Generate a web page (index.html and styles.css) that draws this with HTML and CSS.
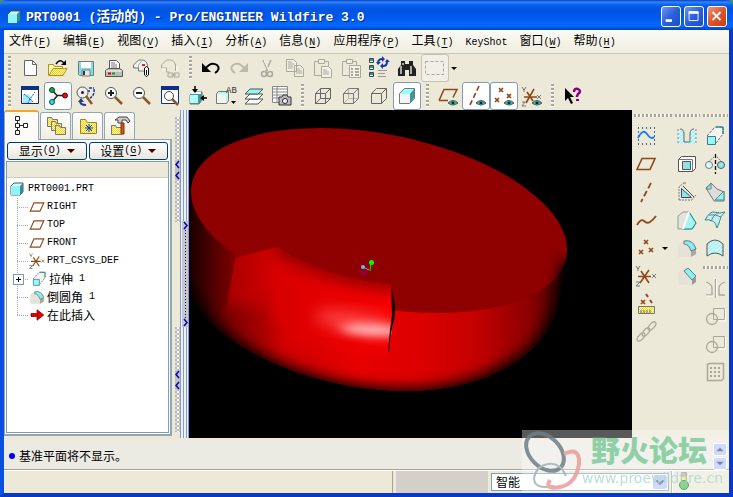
FILE: index.html
```html
<!DOCTYPE html>
<html lang="zh-CN">
<head>
<meta charset="utf-8">
<title>PRT0001 (活动的) - Pro/ENGINEER Wildfire 3.0</title>
<link rel="stylesheet" href="styles.css">
</head>
<body>
<svg class="defs" aria-hidden="true">
  <defs>
    <pattern id="hatch" width="4" height="4" patternUnits="userSpaceOnUse"><rect width="4" height="4" fill="#a8f4f8"/><path d="M0 4L4 0" stroke="#fff"/></pattern>
    <pattern id="check" width="2" height="2" patternUnits="userSpaceOnUse"><rect width="2" height="2" fill="#ffff90"/><path d="M0 0h1v1H0zM1 1h1v1H1z" fill="#f0d040"/></pattern>
    <g id="eye"><path d="M12 19q5-5 10 0q-5 4-10 0z" fill="#888" stroke="#555"/><circle cx="17" cy="19" r="2.2" fill="#00a0a0"/><circle cx="17" cy="19" r="1" fill="#000"/></g>
    <g id="x"><path d="M-2-2L2 2M2-2L-2 2" stroke-width="1.6" fill="none"/></g>
  </defs>
  <symbol id="part" viewBox="0 0 14 14"><path d="M1 4l3-3h9v9l-3 3H1z" fill="#c8ffff" stroke="#555"/><path d="M10 4l3-3v9l-3 3z" fill="#358e94"/><path d="M1 4h9v9H1z" fill="#8ff4f8"/></symbol>
  <symbol id="new" viewBox="0 0 24 24"><path d="M6.500 4.500h8l4 4v11h-12z" fill="#fff" stroke="#666"/><path d="M14.500 4.500v4h4" fill="none" stroke="#666"/></symbol>
  <symbol id="open" viewBox="0 0 24 24"><path d="M2.500 19.500v-11h5l1 2h8v3" fill="#ffffb0" stroke="#b89018"/><path d="M3 19.500l4-7h14l-4 7z" fill="url(#check)" stroke="#b89018"/><path d="M10 8q4-6 8-1" fill="none" stroke="#000" stroke-width="1.500"/><path d="M20 4v5h-5z"/></symbol>
  <symbol id="save" viewBox="0 0 24 24"><path d="M4.500 5.500h15v14h-14l-1-1z" fill="#78e4e8" stroke="#777"/><path d="M7 6h10v6H7z" fill="#fff"/><path d="M8 14h8v6H8z" fill="#e8e8e8" stroke="#777"/><path d="M10 15v4" stroke="#333" stroke-width="2"/></symbol>
  <symbol id="print" viewBox="0 0 24 24"><path d="M7.500 13.500v-9h7l3 3v6" fill="#fff" stroke="#555"/><path d="M9 7h4M9 9h6M9 11h6" stroke="#777"/><path d="M3.500 14.500l3-2h11l3 2v6h-17z" fill="#bbb" stroke="#555"/><path d="M4 15h16" stroke="#fff"/><path d="M6 17.500h3" stroke="#d00" stroke-width="2"/><path d="M10 17.500h3" stroke="#0a0" stroke-width="2"/></symbol>
  <symbol id="mail" viewBox="0 0 24 24"><path d="M3.500 12V9l5-5h3q5 0 6 5v6h-9v-3z" fill="#f0f0f0" stroke="#777"/><path d="M8.500 12V9l3-4" fill="none" stroke="#aaa"/><path d="M12 8h3v2h-3z" fill="#e02020"/><path d="M14.500 19v-7q2-3 4 0v7q-2 3-4 0zM16.500 14v5" fill="#fff" stroke="#111"/></symbol>
  <symbol id="maillink" viewBox="0 0 24 24"><path d="M3.500 12V9l5-5h3q5 0 6 5v6M3.500 12h5v4h3M10 17h5v4h-5zM16 17h5v4h-5zM13 19h5" fill="none" stroke="#aaa899"/><path d="M19 10v5M4 13h4" stroke="#fff"/></symbol>
  <symbol id="undo" viewBox="0 0 24 24"><path d="M6 13q6-8 12-4q4 4-2 8" fill="none" stroke="currentColor" stroke-width="2"/><path d="M3 7v9h9z" fill="currentColor"/></symbol>
  <symbol id="cut" viewBox="0 0 24 24"><path d="M8 4l5 11M16 4l-5 11" stroke="#aaa899" stroke-width="1.500"/><path d="M9 4l5 11" stroke="#fff"/><circle cx="9" cy="18" r="2.500" fill="none" stroke="#aaa899" stroke-width="1.500"/><circle cx="15" cy="18" r="2.500" fill="none" stroke="#aaa899" stroke-width="1.500"/></symbol>
  <symbol id="copy" viewBox="0 0 24 24"><path d="M3.500 3.500h7l3 3v9h-10zM11.500 9.500h6l3 3v8h-9z" fill="#f0eee2" stroke="#aaa899"/><path d="M5 6h4M5 8h6M5 10h5M5 12h5M13 13h4M13 15h6M13 17h6" stroke="#aaa899"/></symbol>
  <symbol id="paste" viewBox="0 0 24 24"><path d="M3.500 5.500h14v14h-14z" fill="none" stroke="#aaa899"/><path d="M7.500 3.500h6v4h-6z" fill="#f0eee2" stroke="#aaa899"/><path d="M10.500 10.500h7l3 3v8h-10z" fill="#f4f2e8" stroke="#aaa899"/><path d="M12 14h4M12 16h6M12 18h6" stroke="#aaa899"/></symbol>
  <symbol id="pastesp" viewBox="0 0 24 24"><path d="M3.500 5.500h14v14h-14z" fill="none" stroke="#aaa899"/><path d="M7.500 3.500h6v4h-6z" fill="#f0eee2" stroke="#aaa899"/><path d="M10.500 9.500h11v12h-11z" fill="#f4f2e8" stroke="#aaa899"/><path d="M12 13h2M16 13h4M12 16h2M16 16h4M12 19h2M16 19h4" stroke="#aaa899" stroke-width="2"/></symbol>
  <symbol id="regen" viewBox="0 0 24 24"><g fill="#fff" stroke="#444"><path d="M2.500 2.500h4v4h-4zM2.500 9.500h4v4h-4zM2.500 16.500h4v4h-4z"/></g><path d="M3 4h3M3 11h3M3 18h3" stroke="#0aa" stroke-width="2"/><path d="M11 6q1-3 4-3M20 6q0 4-4 4" fill="none" stroke="#1838b0" stroke-width="2"/><path d="M15 0l3 3-3 3zM16 7v6l-3-3zM9 6h5l-3 3zM18 6h5l-3-3z" fill="#1838b0"/><path d="M11 14.500h9M11 17.500h7M11 20.500h8" stroke="#999"/></symbol>
  <symbol id="find" viewBox="0 0 24 24"><path d="M6 5h4v3h4V5h4v4l3 4v7h-7v-6h-4v6H3v-7l3-4z" fill="#222"/><path d="M6 10v8M16 10v8M8 7v2" stroke="#aaa" stroke-width="2"/></symbol>
  <symbol id="box" viewBox="0 0 24 24"><path d="M2.500 5.500h18v13h-18z" fill="none" stroke="#aaa899" stroke-dasharray="3 2"/></symbol>
  <symbol id="repaint" viewBox="0 0 24 24"><path d="M3.500 3.500h17v16h-17z" fill="#fff" stroke="#225"/><path d="M3 2h18v4H3z" fill="#0a328c"/><path d="M5 10q10-1 9 9H5z" fill="#a0e8ff"/><path d="M6 10l6 5 5-7M12 15l-2 4M12 15l3 3" stroke="#2860a0" fill="none" stroke-dasharray="2 1"/></symbol>
  <symbol id="spin" viewBox="0 0 24 24"><path d="M6 6l5 5.500h8M11 12l-5 6" stroke="#222" fill="none" stroke-width="1.500"/><circle cx="6" cy="6" r="2.500" fill="#18a828" stroke="#044"/><circle cx="19" cy="11.500" r="2.500" fill="#e01010" stroke="#500"/><circle cx="6" cy="18" r="2.500" fill="#30d8e8" stroke="#055"/></symbol>
  <symbol id="orient" viewBox="0 0 24 24"><circle cx="8.500" cy="8.500" r="5.500" fill="#eee" stroke="#555"/><circle cx="8.500" cy="8.500" r="1.500" fill="#222"/><path d="M12 12l6 8" stroke="#8d572e" stroke-width="2.500"/><path d="M15 4h5M14 7h2M20 5q1 6-4 9" fill="none" stroke="#203898" stroke-width="1.500" stroke-dasharray="3 1"/><path d="M6 17q0 4 6 4" fill="none" stroke="#203898" stroke-width="2"/><path d="M4 18l3-4 3 4z" fill="#203898"/></symbol>
  <symbol id="zoomin" viewBox="0 0 24 24"><circle cx="9" cy="9" r="5.500" fill="#fff" stroke="#555"/><path d="M6 9h6M9 6v6" stroke="#222" stroke-width="2"/><path d="M13 13l7 7" stroke="#8d572e" stroke-width="2.500"/></symbol>
  <symbol id="zoomout" viewBox="0 0 24 24"><circle cx="9" cy="9" r="5.500" fill="#fff" stroke="#555"/><path d="M6 9h6" stroke="#222" stroke-width="2"/><path d="M13 13l7 7" stroke="#8d572e" stroke-width="2.500"/></symbol>
  <symbol id="refit" viewBox="0 0 24 24"><path d="M3.500 3.500h17v16h-17z" fill="#fff" stroke="#0a328c"/><path d="M3 2h18v4H3z" fill="#0a328c"/><circle cx="11" cy="12" r="4.500" fill="#fff" stroke="#444"/><path d="M14 15l6 6" stroke="#8d572e" stroke-width="2.500"/></symbol>
  <symbol id="angle" viewBox="0 0 24 24"><path d="M4 11l3-3h9v8l-3 4H4z" fill="#389ca0" stroke="#777"/><path d="M4 11h8v8H4z" fill="#b0ffff"/><path d="M5 9h10" stroke="#fff" stroke-width="2"/><path d="M9 2v5M21 14h-5" stroke="#000" stroke-width="1.500"/><path d="M6 5h6l-3 4zM18 11v6l-4-3z"/></symbol>
  <symbol id="layers" viewBox="0 0 24 24"><g stroke="#555"><path d="M3 20l5-5h13l-5 5z" fill="#fff"/><path d="M3 15l5-5h13l-5 5z" fill="#fff"/><path d="M3 10l5-5h13l-5 5z" fill="#98f4f4"/></g></symbol>
  <symbol id="viewmgr" viewBox="0 0 24 24"><path d="M2.500 2.500h15v16h-15z" fill="#fff" stroke="#888"/><path d="M3 5h14M3 8h14M3 11h14M3 14h14M7 3v15" stroke="#888"/><path d="M9 13h3l1-2h4l1 2h3v8H9z" fill="#bbb" stroke="#333"/><circle cx="15" cy="17" r="2.500" fill="#fff" stroke="#222"/></symbol>
  <symbol id="wire" viewBox="0 0 24 24"><path d="M4.500 9.500h10v10h-10zM9.500 4.500h10v10h-10zM4.500 9.500l5-5M14.500 9.500l5-5M4.500 19.500l5-5M14.500 19.500l5-5" fill="none" stroke="#666"/></symbol>
  <symbol id="hidden" viewBox="0 0 24 24"><path d="M9.500 4.500v10h10M4.500 19.500l5-5" fill="none" stroke="#b8b5a5"/><path d="M4.500 9.500h10v10h-10zM4.500 9.500l5-5h10v10l-5 5M14.500 9.500l5-5" fill="none" stroke="#777"/></symbol>
  <symbol id="nohidden" viewBox="0 0 24 24"><path d="M4.500 9.500h10v10h-10zM4.500 9.500l5-5h10v10l-5 5M14.500 9.500l5-5" fill="none" stroke="#666"/></symbol>
  <symbol id="shaded" viewBox="0 0 24 24"><path d="M4.500 9.500l5-5h10v10l-5 5h-10z" fill="#98ffff" stroke="#777"/><path d="M15 10l4-5v9l-4 5z" fill="#3898a0"/><path d="M5 10h10v9H5z" fill="#f4f4f4"/></symbol>
  <symbol id="plane" viewBox="0 0 24 24"><path d="M3 17.500l5-11h13l-5 11z" fill="none" stroke="#8f4818" stroke-width="1.600"/></symbol>
  <symbol id="planeeye" viewBox="0 0 24 24"><path d="M3 16.500l5-11h13l-4 8M3 16.500h9" fill="none" stroke="#8f4818" stroke-width="1.500"/><use href="#eye"/></symbol>
  <symbol id="axiseye" viewBox="0 0 24 24"><path d="M15 2L6 21" stroke="#8f4818" stroke-width="1.700" stroke-dasharray="5 3"/><use href="#eye"/></symbol>
  <symbol id="pointeye" viewBox="0 0 24 24"><g stroke="#8f4818"><use href="#x" x="9" y="6"/><use href="#x" x="5" y="16"/><use href="#x" x="17" y="12"/></g><use href="#eye"/></symbol>
  <symbol id="csyseye" viewBox="0 0 24 24"><path d="M4 13h13M6 19l8-14M7 8l6 9" stroke="#8f4818" stroke-width="1.600"/><path d="M2 3l2 3 2-3M4 5v3M2 18h3l-3 4h4M17 11l4 4M21 11l-4 4" stroke="#777" fill="none"/><use href="#eye"/></symbol>
  <symbol id="help" viewBox="0 0 24 24"><path d="M4 4v13l3-3 3 6 2-1-3-6h4z"/><path d="M13 8q0-4 4-3q4 2 0 5l-1 2v1" fill="none" stroke="#800080" stroke-width="2.500"/><path d="M15 15h3v2h-3z" fill="#800080"/></symbol>
  <symbol id="tree" viewBox="0 0 24 24"><path d="M7.500 5v14M7.500 11.500h8" stroke="#222"/><g fill="#fff" stroke="#222"><path d="M5.500 2.500h4v4h-4zM5.500 9.500h4v4h-4zM5.500 16.500h4v4h-4zM13.500 9.500h4v4h-4z"/></g></symbol>
  <symbol id="folders" viewBox="0 0 24 24"><g fill="url(#check)" stroke="#777"><path d="M3.500 12.500v-9h4l1 2h5v7z"/><path d="M7.500 16.500v-9h4l1 2h5v7z"/><path d="M11.500 20.500v-9h4l1 2h5v7z"/></g></symbol>
  <symbol id="fav" viewBox="0 0 24 24"><path d="M4.500 19.500v-14h5l2 3h9v11z" fill="url(#check)" stroke="#998324"/><path d="M13 10v8M9 14h8M10 11l6 6M16 11l-6 6" stroke="#1038a0"/></symbol>
  <symbol id="tools" viewBox="0 0 24 24"><path d="M3.500 20.500v-9h4l1 2h5v7z" fill="url(#check)" stroke="#777"/><path d="M7 6l4-3h8l3 4-2 2-2-3h-4v3h-4V6z" fill="#ccc" stroke="#444"/><path d="M13 9h3v11h-3z" fill="#d85020" stroke="#803010"/></symbol>
  <symbol id="csys" viewBox="0 0 24 24"><path d="M4 12.500h13M6 19l9-13M7 7l8 12" stroke="#8f4818" stroke-width="1.600"/><path d="M2 2l2 3 2-3M4 4v3M2 18h4l-4 4h4M18 10l4 4M22 10l-4 4" stroke="#777" fill="none"/></symbol>
  <symbol id="extrude" viewBox="0 0 24 24"><path d="M4 12l8-9h8v7l-7 9" fill="#f4f4f0" stroke="#777" stroke-dasharray="3 1"/><path d="M13 3h7v7" fill="none" stroke="#00777c"/><path d="M4.500 12.500h8v8h-8z" fill="#98f8f8" stroke="#388088"/></symbol>
  <symbol id="round" viewBox="0 0 24 24"><path d="M3 9l6-5h5q8 3 8 11v3l-5 3H3z" fill="#e5e3d9"/><path d="M16 14l5-2v6l-5 3z" fill="#aaa9a0"/><path d="M9 5q9-2 12 8l-5 2q-2-7-7-7z" fill="#80f0f4" stroke="#777"/></symbol>
  <symbol id="insert" viewBox="0 0 24 24"><path d="M4 10h8V5l9 7-9 7v-5H4z" fill="#e00000" stroke="#700"/></symbol>
  <symbol id="sketch" viewBox="0 0 24 24"><path d="M4 4h17M4 8h1M20 8h1M4 12h1M20 12h1M4 16h1M20 16h1M4 20h17" stroke="#103890" stroke-width="1.500" stroke-dasharray="1 3"/><path d="M4 14q5-10 9-4t7 3" fill="none" stroke="#1080f0" stroke-width="1.800"/></symbol>
  <symbol id="axis" viewBox="0 0 24 24"><path d="M17 3L7 22" stroke="#8f4818" stroke-width="1.800" stroke-dasharray="6 3"/></symbol>
  <symbol id="curve" viewBox="0 0 24 24"><path d="M3 17q4-7 7-4t6 1t6-6" fill="none" stroke="#8f4818" stroke-width="1.800"/></symbol>
  <symbol id="points" viewBox="0 0 24 24"><g stroke="#8f4818"><use href="#x" x="12" y="6"/><use href="#x" x="7" y="16"/><use href="#x" x="17" y="14"/></g></symbol>
  <symbol id="analysis" viewBox="0 0 24 24"><g stroke="#8f4818"><use href="#x" x="9" y="10"/><path d="M12 2l2 3M16 8l2 3" stroke-width="2"/></g><path d="M4.500 14.500h16v7h-16z" fill="url(#check)" stroke="#777"/><path d="M7 18v3M10 18v3M13 18v3M16 18v3" stroke="#666"/></symbol>
  <symbol id="chain" viewBox="0 0 24 24"><g fill="none" stroke="#aaa899" stroke-width="1.300"><ellipse cx="7" cy="17" rx="5" ry="2.500" transform="rotate(-48 7 17)"/><ellipse cx="12" cy="12" rx="5" ry="2.500" transform="rotate(-48 12 12)"/><ellipse cx="18" cy="6" rx="5" ry="2.500" transform="rotate(-48 18 6)"/></g></symbol>
  <symbol id="hole" viewBox="0 0 24 24"><path d="M3 6h18v14H3z" fill="url(#hatch)"/><path d="M5 5q4 0 4 5v8h6v-8q0-5 4-5" fill="#eae7d7" stroke="#666"/><path d="M3 5v14M21 5v14" stroke="#888" stroke-dasharray="2 2"/></symbol>
  <symbol id="shell" viewBox="0 0 24 24"><path d="M3.500 7.500l3-3h14v12l-3 3h-14z" fill="#fff" stroke="#555"/><path d="M3.500 7.500h14v12" fill="none" stroke="#777"/><path d="M7.500 9.500h8v8h-8z" fill="#80e8ec" stroke="#555"/><path d="M8 10h2v5l-2 2z" fill="#ccc"/></symbol>
  <symbol id="rib" viewBox="0 0 24 24"><path d="M4 20V7l6-5v3M4 20h13l4-5" fill="none" stroke="#777" stroke-dasharray="2 1"/><path d="M6.500 8.500v9h10z" fill="#80ecec" stroke="#446"/><path d="M8 6l11 11" stroke="#444"/></symbol>
  <symbol id="draft" viewBox="0 0 24 24"><path d="M3 8l5-4h6l7 11-3 5-4 1H3z" fill="#e2e4da" stroke="#999"/><path d="M14 4l7 11-4 6H8z" fill="#a8f4f4" stroke="#089"/><path d="M14 4l-6 17" stroke="#fff" stroke-width="2"/></symbol>
  <symbol id="chamfer" viewBox="0 0 24 24"><path d="M3 8l6-4h5l7 8v6l-4 3H3z" fill="#e5e3d9"/><path d="M9 7l4-3 8 8-4 4z" fill="#80f4f8" stroke="#777"/><path d="M17 16l4-3v5l-4 3z" fill="#999"/></symbol>
  <symbol id="revolve" viewBox="0 0 24 24"><path d="M12.500 2v20" stroke="#111" stroke-width="1.300" stroke-dasharray="4 2"/><path d="M5 10l6-5M14 5l5 5" fill="none" stroke="#777" stroke-dasharray="2 1"/><circle cx="6" cy="13" r="3.500" fill="#c8ffff" stroke="#777"/><circle cx="18" cy="13" r="3.500" fill="#90e8ea" stroke="#555"/></symbol>
  <symbol id="sweep" viewBox="0 0 24 24"><path d="M8 3l6 6 7 3v9H11L3 8z" fill="#ddd" stroke="#777"/><path d="M8 3v6H3zM12 20h9v-9z" fill="#90f4f4" stroke="#588"/></symbol>
  <symbol id="blend" viewBox="0 0 24 24"><path d="M2 12q5-9 9-8q6 2 11 0-5 4-6 11l-2 5q-2-7-5-7-4-2-7-1z" fill="url(#hatch)" stroke="#3a8b8f"/><path d="M6 7q7-1 12 2M16 4q-6 3-8 9" fill="none" stroke="#777"/></symbol>
  <symbol id="surface" viewBox="0 0 24 24"><path d="M4 8q8-8 16 0v12q-8-6-16 0z" fill="url(#hatch)" stroke="#555"/></symbol>
  <symbol id="mirror" viewBox="0 0 24 24"><path d="M12.500 3v19M3 19h6v-7q0-4-6-6M22 19h-6v-7q0-4 6-6" fill="none" stroke="#aaa899" stroke-width="1.300"/><path d="M13.500 3v19M3 20h7" fill="none" stroke="#fff"/></symbol>
  <symbol id="merge" viewBox="0 0 24 24"><path d="M10.500 4.500h11v11h-11z" fill="none" stroke="#aaa899"/><circle cx="9" cy="15" r="5.500" fill="none" stroke="#aaa899" stroke-width="1.300"/><path d="M22.500 5v12H16" fill="none" stroke="#fff"/></symbol>
  <symbol id="pattern" viewBox="0 0 24 24"><path d="M4.500 4.500l2-1h14v15l-2 2h-14z" fill="none" stroke="#aaa899" stroke-width="1.500"/><path d="M7 8h11M7 12h11M7 16h11" stroke="#aaa899" stroke-width="2" stroke-dasharray="2 2"/></symbol>
</svg>

<div class="window">
  <header class="title">
    <svg class="i14"><use href="#part"/></svg>
    <h1>PRT0001 (<span class="zh">活动的</span>) - Pro/ENGINEER Wildfire 3.0</h1>
    <button class="cap" aria-label="最小化"><svg viewBox="0 0 20 20"><path d="M4 13h7v3H4z" fill="#fff"/></svg></button>
    <button class="cap" aria-label="最大化"><svg viewBox="0 0 20 20"><path d="M4.500 5.500h10v9h-10z" fill="none" stroke="#fff"/><path d="M4 4h11v3H4z" fill="#fff"/></svg></button>
    <button class="cap close" aria-label="关闭"><svg viewBox="0 0 20 20"><path d="M5 5l9 9M14 5l-9 9" stroke="#fff" stroke-width="2.200"/></svg></button>
  </header>

  <nav class="menu">
    <a href="#">文件<span>(<u>F</u>)</span></a><a href="#">编辑<span>(<u>E</u>)</span></a><a href="#">视图<span>(<u>V</u>)</span></a><a href="#">插入<span>(<u>I</u>)</span></a><a href="#">分析<span>(<u>A</u>)</span></a><a href="#">信息<span>(<u>N</u>)</span></a><a href="#">应用程序<span>(<u>P</u>)</span></a><a href="#">工具<span>(<u>T</u>)</span></a><a href="#"><span>KeyShot</span></a><a href="#">窗口<span>(<u>W</u>)</span></a><a href="#">帮助<span>(<u>H</u>)</span></a>
  </nav>

  <div class="bars">
    <div class="bar">
      <div class="group"><button aria-label="新建"><svg><use href="#new"/></svg></button><button aria-label="打开"><svg><use href="#open"/></svg></button><button aria-label="保存"><svg><use href="#save"/></svg></button><button aria-label="打印"><svg><use href="#print"/></svg></button><button aria-label="发送"><svg><use href="#mail"/></svg></button><button aria-label="发送链接"><svg><use href="#maillink"/></svg></button></div>
      <div class="group"><button aria-label="撤消"><svg><use href="#undo"/></svg></button><button class="redo" aria-label="重做"><svg><use href="#undo"/></svg></button><button aria-label="剪切"><svg><use href="#cut"/></svg></button><button aria-label="复制"><svg><use href="#copy"/></svg></button><button aria-label="粘贴"><svg><use href="#paste"/></svg></button><button aria-label="选择性粘贴"><svg><use href="#pastesp"/></svg></button><button aria-label="再生"><svg><use href="#regen"/></svg></button><button aria-label="查找"><svg><use href="#find"/></svg></button><button class="dim" aria-label="选取框"><svg><use href="#box"/></svg></button><button class="drop" aria-label="选取选项"></button></div>
    </div>
    <div class="bar">
      <div class="group"><button aria-label="重画"><svg><use href="#repaint"/></svg></button><button class="on" aria-label="旋转中心"><svg><use href="#spin"/></svg></button><button aria-label="定向模式"><svg><use href="#orient"/></svg></button><button aria-label="放大"><svg><use href="#zoomin"/></svg></button><button aria-label="缩小"><svg><use href="#zoomout"/></svg></button><button aria-label="重新调整"><svg><use href="#refit"/></svg></button><button aria-label="重定向"><svg><use href="#angle"/></svg></button><button aria-label="视图列表"><svg viewBox="0 0 24 24"><path d="M2.500 9.500l2-2h10v9l-2 3h-10z" fill="#b0f8f8" stroke="#777"/><path d="M3 10h9v9H3z" fill="#f4f4ee"/><path d="M17 17h5l-2.500 3z"/><text x="12" y="9" class="ab">AB</text></svg></button><button aria-label="层"><svg><use href="#layers"/></svg></button><button aria-label="视图管理器"><svg><use href="#viewmgr"/></svg></button></div>
      <div class="group"><button aria-label="线框"><svg><use href="#wire"/></svg></button><button aria-label="隐藏线"><svg><use href="#hidden"/></svg></button><button aria-label="无隐藏线"><svg><use href="#nohidden"/></svg></button><button class="on" aria-label="着色"><svg><use href="#shaded"/></svg></button></div>
      <div class="group"><button aria-label="基准平面开关"><svg><use href="#planeeye"/></svg></button><button class="on" aria-label="基准轴开关"><svg><use href="#axiseye"/></svg></button><button class="on" aria-label="基准点开关"><svg><use href="#pointeye"/></svg></button><button aria-label="坐标系开关"><svg><use href="#csyseye"/></svg></button></div>
      <div class="group"><button aria-label="上下文帮助"><svg><use href="#help"/></svg></button></div>
    </div>
  </div>

  <main class="main">
    <aside class="side">
      <div class="tabs"><button class="tab sel" aria-label="模型树"><svg><use href="#tree"/></svg></button><button class="tab" aria-label="文件夹浏览器"><svg><use href="#folders"/></svg></button><button class="tab" aria-label="收藏夹"><svg><use href="#fav"/></svg></button><button class="tab" aria-label="连接"><svg><use href="#tools"/></svg></button></div>
      <div class="panel">
        <div class="pair"><button>显示<span>(<u>O</u>)</span><i></i></button><button>设置<span>(<u>G</u>)</span><i></i></button></div>
        <div class="treebox">
          <div class="treehead"></div>
          <div class="root"><svg class="i14"><use href="#part"/></svg><span>PRT0001.PRT</span></div>
          <ul class="tree">
            <li><svg><use href="#plane"/></svg><span>RIGHT</span></li>
            <li><svg><use href="#plane"/></svg><span>TOP</span></li>
            <li><svg><use href="#plane"/></svg><span>FRONT</span></li>
            <li><svg><use href="#csys"/></svg><span>PRT_CSYS_DEF</span></li>
            <li class="more"><svg><use href="#extrude"/></svg>拉伸<span>&nbsp;1</span></li>
            <li><svg><use href="#round"/></svg>倒圆角<span>&nbsp;1</span></li>
            <li><svg><use href="#insert"/></svg>在此插入</li>
          </ul>
        </div>
      </div>
    </aside>

    <div class="sash">
      <div class="dots"><svg viewBox="0 0 5 20"><path d="M4 1L1 4.500 4 8M4 12L1 15.500 4 19"/></svg></div>
      <div class="space"></div>
      <div class="dots"><svg viewBox="0 0 5 20"><path d="M4 1L1 4.500 4 8M4 12L1 15.500 4 19"/></svg></div>
    </div>
    <div class="rail">
      <div class="grab"><svg viewBox="0 0 5 9"><path d="M1 1l3 3.500L1 8"/></svg><div class="pips"></div><svg viewBox="0 0 5 9"><path d="M1 1l3 3.500L1 8"/></svg></div>
    </div>

    <section class="view" aria-label="模型视图">
      <svg viewBox="189 110 443 328" preserveAspectRatio="xMinYMin meet">
        <defs>
          <linearGradient id="wall" gradientUnits="userSpaceOnUse" x1="189" y1="0" x2="567" y2="0">
            <stop offset="0" stop-color="#180000"/><stop offset=".12" stop-color="#800000"/><stop offset=".25" stop-color="#c80000"/><stop offset=".45" stop-color="#e80000"/><stop offset=".62" stop-color="#dc0000"/><stop offset=".76" stop-color="#c40000"/><stop offset=".9" stop-color="#8c0000"/><stop offset=".97" stop-color="#500000"/><stop offset="1" stop-color="#180000"/>
          </linearGradient>
          <linearGradient id="fillet" gradientUnits="userSpaceOnUse" x1="228" y1="0" x2="392" y2="0">
            <stop offset="0" stop-color="#a80000"/><stop offset=".3" stop-color="#d80000"/><stop offset="1" stop-color="#f80000"/>
          </linearGradient>
          <linearGradient id="fade" gradientUnits="userSpaceOnUse" x1="220" y1="306" x2="236" y2="330"><stop offset="0" stop-color="#fff"/><stop offset="1" stop-color="#fff" stop-opacity="0"/></linearGradient>
          <filter id="b8" x="-20%" y="-60%" width="140%" height="220%"><feGaussianBlur stdDeviation="8"/></filter>
          <filter id="b7" x="-20%" y="-20%" width="140%" height="140%"><feGaussianBlur stdDeviation="7"/></filter>
          <filter id="b5" x="-30%" y="-80%" width="160%" height="260%"><feGaussianBlur stdDeviation="7 4"/></filter>
          <mask id="soft" maskUnits="userSpaceOnUse" x="189" y="110" width="443" height="328"><path d="M180 110H270V306H180z" fill="#fff" filter="url(#b8)"/><path d="M189 110H300V290H189z" fill="#fff"/><path d="M252 220H460V350H285z" fill="#fff" filter="url(#b8)"/><path d="M265 220H460V320H275z" fill="#fff"  filter="url(#b5)"/></mask>
          <clipPath id="bodyclip"><path d="M180 190H191L567 246Q562 296 556 311C549 332 534 350 517 361C490 379 452 391 405 391C372 391 335 385 296 372C256 358 220 335 204 315Q194 303 186 285z"/></clipPath>
          <clipPath id="filletclip"><path d="M235 258L277 247C307 268 350 281 391 285L393 300 393 322 389 350 387 400H200V340L227 306z"/></clipPath>
        </defs>
        <path d="M189 110H632V438H189z"/>
        <g clip-path="url(#bodyclip)">
          <path d="M180 180H570V400H180z" fill="url(#wall)"/>
        </g>
        <ellipse cx="379" cy="220.500" rx="190.800" ry="86.500" transform="rotate(11.070 379 220.500)" fill="#8f0000"/>
        <g clip-path="url(#bodyclip)">
          <g clip-path="url(#filletclip)">
            <g mask="url(#soft)"><path d="M200 240H396V400H200z" fill="url(#fillet)"/></g>
            <path d="M276 241C307 264 350 276 400 282" fill="none" stroke="#8f0000" stroke-width="20" filter="url(#b8)"/>
            <ellipse cx="356" cy="322" rx="42" ry="9" transform="rotate(9 356 322)" fill="#ff4848" filter="url(#b8)"/>
            <ellipse cx="373" cy="330" rx="32" ry="6" transform="rotate(3 373 330)" fill="#ffb4b4" filter="url(#b5)"/>
          </g>
          <path d="M569 262Q563 300 559 314C552 335 537 353 519 364C492 382 454 396 405 396C372 396 335 390 296 377C256 363 220 341 202 319Q192 307 180 285" fill="none" stroke="#000" stroke-width="16" filter="url(#b7)"/>
        </g>
        <path d="M391 286L395 305 395 315 391 333 389 352 388 352 390 330 392 315z" fill="#180000"/>
        <path d="M371 263L370 271" fill="none" stroke="#00f000"/><path d="M369 270L363 267" stroke="#60b0f0"/>
        <circle cx="371.500" cy="262.500" r="2.500" fill="#00ff00"/><circle cx="363" cy="267" r="2" fill="#60b8ff"/><circle cx="364" cy="273" r="3" fill="#900038"/>
      </svg>
    </section>

    <div class="tools">
      <div class="col wide"><div class="hgrip"></div><button aria-label="草绘"><svg><use href="#sketch"/></svg></button><button aria-label="平面"><svg><use href="#plane"/></svg></button><button aria-label="轴"><svg><use href="#axis"/></svg></button><button aria-label="曲线"><svg><use href="#curve"/></svg></button><div class="split"><button aria-label="点"><svg><use href="#points"/></svg></button><button class="drop" aria-label="点类型"></button></div><button aria-label="坐标系"><svg><use href="#csys"/></svg></button><button aria-label="分析特征"><svg><use href="#analysis"/></svg></button><button aria-label="参照"><svg><use href="#chain"/></svg></button></div>
      <div class="col"><div class="hgrip"></div><button aria-label="孔"><svg><use href="#hole"/></svg></button><button aria-label="壳"><svg><use href="#shell"/></svg></button><button aria-label="筋"><svg><use href="#rib"/></svg></button><button aria-label="拔模"><svg><use href="#draft"/></svg></button><button aria-label="倒圆角"><svg><use href="#round"/></svg></button><button aria-label="倒角"><svg><use href="#chamfer"/></svg></button></div>
      <div class="col"><div class="hgrip"></div><button aria-label="拉伸"><svg><use href="#extrude"/></svg></button><button aria-label="旋转"><svg><use href="#revolve"/></svg></button><button aria-label="扫描"><svg><use href="#sweep"/></svg></button><button aria-label="边界混合"><svg><use href="#blend"/></svg></button><button aria-label="造型"><svg><use href="#surface"/></svg></button><div class="hgrip"></div><button aria-label="镜像"><svg><use href="#mirror"/></svg></button><button aria-label="合并"><svg><use href="#merge"/></svg></button><button aria-label="修剪"><svg><use href="#merge"/></svg></button><button aria-label="阵列"><svg><use href="#pattern"/></svg></button></div>
    </div>
  </main>

  <div class="message"><p>基准平面将不显示。</p><div class="spin"><button aria-label="向上"><svg viewBox="0 0 12 12"><path d="M2 8l4-4 4 4z"/></svg></button><button aria-label="向下"><svg viewBox="0 0 12 12"><path d="M2 4l4 4 4-4z"/></svg></button></div></div>
  <footer class="status">
    <div class="well"></div>
    <label class="pick"><select aria-label="选取过滤器"><option>智能</option></select><svg viewBox="0 0 16 16"><path d="M4 6l4 4 4-4" fill="none" stroke="#4d6185" stroke-width="2.500"/></svg></label>
    <div class="light"><svg viewBox="0 0 12 20"><path d="M3.500 1.500h5v12h-5z" fill="#eee" stroke="#777"/><path d="M4 2h4v4H4z" fill="#f09090"/><path d="M4 6h4v4H4z" fill="#f4f040"/><circle cx="6" cy="14" r="4.500" fill="#40c850" stroke="#286030"/></svg></div>
  </footer>

  <div class="mark">
    <svg viewBox="0 0 60 62"><g fill="none"><ellipse cx="23" cy="22" rx="22" ry="15" transform="rotate(45 23 22)" stroke="#6e7e88" stroke-width="4"/><path d="M32 56Q12 60 12 48Q14 36 26 34T44 46" stroke="#a0b4b8" stroke-width="2"/><path d="M42 24Q58 16 57 34Q54 54 38 57T28 50" stroke="#eb9c9a" stroke-width="4"/></g></svg>
    <div class="words"><b>野火论坛</b><span>www.proewildfire.cn</span></div>
  </div>
</div>
</body>
</html>
```
FILE: styles.css
```css
* { box-sizing: border-box; }
html, body { margin: 0; height: 100%; }
body {
  background: #3f8f80;
  color: #000;
  font: 12px/18px "Noto Sans CJK SC", sans-serif;
}
.defs { position: absolute; width: 0; height: 0; }
.ab { font: 9px "Liberation Mono", monospace; fill: #333; }
svg { display: block; }
button { font: inherit; color: inherit; padding: 0; margin: 0; border: 0; background: none; }
u { text-underline-offset: 2px; }

.window {
  position: relative;
  display: flex;
  flex-direction: column;
  min-height: 100vh;
  background: #ece9d8;
  border: solid #0a50e0;
  border-color: #0a50e0 #0838c8 #0838c8 #0a50e0;
  border-width: 0 4px 4px;
  border-radius: 7px 7px 0 0;
}
.title {
  display: flex;
  align-items: center;
  gap: 3px;
  height: 30px;
  margin: 0 -4px;
  padding: 3px 6px 0 7px;
  border-radius: 7px 7px 0 0;
  background: linear-gradient(#0a3cc0 0, #2f86fa 2px, #0a60ee 5px, #0054e3 9px, #0058ec 18px, #0068ff 25px, #0060f4 27px, #0040c4 30px);
}
.title h1 {
  flex: 1;
  margin: 0 0 0 2px;
  color: #fff;
  font: bold 13px/20px "Liberation Mono", monospace;
  text-shadow: 1px 1px #0a2a80;
  white-space: nowrap;
}
.title .zh { font: bold 14px/20px "Noto Sans CJK SC", sans-serif; }
.i14 { width: 14px; height: 14px; }
.cap {
  width: 20px;
  height: 21px;
  border: 1px solid #fff;
  border-radius: 3px;
  background: linear-gradient(135deg, #6d98f4, #2a5edc 50%, #1c4fd0);
}
.cap svg { width: 18px; height: 19px; }
.cap.close { background: linear-gradient(135deg, #f09878, #e0532c 50%, #c83c14); }

.menu {
  display: flex;
  gap: 12px;
  height: 24px;
  padding: 0 5px;
  line-height: 20px;
  background: linear-gradient(#fbfaf5, #efedde);
  border-bottom: 1px solid #cbc8b8;
}
.menu a { color: inherit; text-decoration: none; white-space: nowrap; }
.menu span, .pair span, .side li span, .root span { font-family: "Liberation Mono", monospace; font-size: 10px; }

.bars { height: 56px; }
.bar { display: flex; height: 28px; padding-left: 4px; }
.group { display: flex; margin-right: 5px; }
.group::before {
  content: "";
  width: 3px;
  margin: 2px 5px 2px 0;
  background: repeating-linear-gradient(#aaa79a 0 2px, #fff 2px 3px, #ece9d8 3px 4px);
}
.group button, .col button { width: 28px; height: 28px; display: grid; place-items: center; }
.group button svg, .col button svg { width: 24px; height: 24px; }
.redo { color: #bcb9aa; transform: scaleX(-1); }
button.on { background: #fff; border: 1px solid #7f9db9; border-radius: 3px; }
button.dim { background: #f2f0e6; border: 1px solid #c5c2b4; border-radius: 3px; }
.group .drop, .col .drop { width: 10px; }
.drop::before { content: ""; border: solid transparent; border-width: 3px 3px 0; border-top-color: #000; }

.main { display: flex; flex: 1; min-height: 328px; }
.side { width: 168px; display: flex; flex-direction: column; padding-bottom: 2px; }
.tabs { display: flex; gap: 1px; height: 29px; align-items: flex-end; }
.tab {
  width: 31px;
  height: 27px;
  display: grid;
  place-items: center;
  border: 1px solid #91a7b4;
  border-bottom: 0;
  border-radius: 3px 3px 0 0;
  background: linear-gradient(#fdfdfb, #f0eee2);
}
.tab svg { width: 24px; height: 24px; }
.tab.sel { width: 35px; height: 30px; border-top: 2px solid #f4a428; background: #fcfbf8; margin-bottom: -1px; position: relative; }
.panel {
  flex: 1;
  display: flex;
  flex-direction: column;
  padding: 2px 1px 1px;
  background: #fcfbf8;
  border: 1px solid #91a7b4;
  border-width: 1px 2px 2px 1px;
}
.pair { display: flex; gap: 2px; padding: 0 1px; margin-bottom: 1px; }
.pair button {
  flex: 1;
  display: flex;
  justify-content: center;
  align-items: center;
  height: 18px;
  line-height: 16px;
  border: 1px solid #003c74;
  border-radius: 3px;
  background: linear-gradient(#fff, #e8e6da);
  white-space: nowrap;
}
.pair i { margin-left: 6px; border: solid transparent; border-width: 4px 4px 0; border-top-color: #400; }
.treebox { flex: 1; background: #fff; border: 1px solid #7f9db9; }
.treehead { height: 16px; background: #ece9d8; border-bottom: 1px solid #d0cdbc; margin-bottom: 2px; }
.root { display: flex; align-items: center; gap: 4px; height: 18px; padding-left: 3px; }
.tree { list-style: none; margin: 0 0 0 10px; padding: 0; }
.tree li {
  display: flex;
  align-items: center;
  height: 18px;
  padding-left: 10px;
  background:
    repeating-linear-gradient(#aaa 0 1px, transparent 1px 2px) 0 0 / 1px 100% no-repeat,
    repeating-linear-gradient(90deg, #aaa 0 1px, transparent 1px 2px) 0 9px / 12px 1px no-repeat;
}
.tree li:last-child {
  background:
    repeating-linear-gradient(#aaa 0 1px, transparent 1px 2px) 0 0 / 1px 9px no-repeat,
    repeating-linear-gradient(90deg, #aaa 0 1px, transparent 1px 2px) 0 9px / 12px 1px no-repeat;
}
.tree svg { width: 20px; height: 18px; }
.tree .more::before {
  content: "";
  flex: none;
  width: 9px;
  height: 9px;
  margin: 0 5px 0 -14px;
  border: 1px solid #7898b5;
  background:
    linear-gradient(#000, #000) center / 5px 1px no-repeat,
    linear-gradient(#000, #000) center / 1px 5px no-repeat, #fff;
}

.sash { width: 8px; padding: 7px 0 6px 3px; display: flex; flex-direction: column; }
.sash .dots {
  flex: 1;
  display: grid;
  place-items: center;
  background: conic-gradient(#fff 25%, transparent 0 50%, #dcdad4 0 75%, transparent 0) 0 0 / 4px 4px, #bab8b2;
}
.sash .space { flex: 1; }
.sash svg { width: 5px; height: 20px; background: #c0c0c0; }
.sash path, .rail path { fill: none; stroke: #0000b8; stroke-width: 1.500; }
.rail {
  width: 9px;
  display: flex;
  flex-direction: column;
  justify-content: center;
  background: linear-gradient(90deg, #7b9be4 0 1px, #f4f2e8 1px 3px, #7b9be4 3px 4px, #f4f2e8 4px 6px, #7b9be4 6px 7px, #f4f2e8 7px 8px, #7b9be4 8px);
}
.grab { margin: 0 1px 0 2px; height: 106px; display: flex; flex-direction: column; align-items: center; background: #c6c6c6; }
.grab svg { width: 5px; height: 9px; }
.pips { flex: 1; width: 1px; background: repeating-linear-gradient(#0000a0 0 1px, transparent 1px 3px); }

.view { flex: 1; min-width: 0; background: #000; overflow: hidden; }
.view svg { width: 100%; }

.tools { display: flex; }
.col { width: 28px; padding: 4px 0 0; }
.col.wide { width: 41px; }
.hgrip { height: 3px; margin: 0 1px 5px 2px; background: repeating-linear-gradient(90deg, #aaa79a 0 2px, #fff 2px 3px, #ece9d8 3px 4px); }
.col button + .hgrip { margin-top: 4px; }
.split { display: flex; }

.message {
  display: flex;
  align-items: center;
  height: 32px;
  padding: 2px 2px 0 5px;
  background: #ebeae3;
  border-top: 3px solid #efe9da;
  border-bottom: 1px solid #a5a297;
}
.message p { flex: 1; margin: 0; display: flex; align-items: center; gap: 4px; }
.message p::before { content: ""; width: 6px; height: 6px; border-radius: 50%; background: #00f; }
.spin { display: grid; gap: 1px; }
.spin button { width: 14px; height: 13px; border: 1px solid #fff; border-radius: 2px; background: #b4c8fa; }
.spin svg { width: 12px; height: 11px; fill: #35476a; }
.status { display: flex; justify-content: flex-end; height: 23px; border-top: 1px solid #fff; }
.well { width: 95px; background: #d4cfc9; border: solid #ece9d8; border-width: 0 0 0 3px; box-shadow: -1px 0 #a5a297; }
.pick { display: flex; position: relative; width: 178px; height: 18px; margin: 2px 2px 0 3px; }
.pick select {
  appearance: none;
  width: 100%;
  padding: 0 4px;
  border: 1px solid #7f9db9;
  border-radius: 0;
  background: #fff;
  color: #000;
  font: inherit;
  line-height: 16px;
}
.pick svg { position: absolute; right: 2px; top: 2px; width: 14px; height: 14px; background: #b4c8fa; border-radius: 2px; pointer-events: none; }
.light { width: 58px; padding: 0 0 0 6px; border-left: 1px solid #a5a297; box-shadow: inset 1px 0 #fff; }
.light svg { width: 12px; height: 20px; }

.mark {
  position: absolute;
  right: 0;
  bottom: 0;
  display: flex;
  width: 207px;
  height: 63px;
  background: rgba(255, 255, 255, .35);
  pointer-events: none;
}
.mark svg { width: 60px; height: 62px; opacity: .85; }
.words { display: flex; flex-direction: column; color: #8fd0a6; white-space: nowrap; }
.words b { margin-left: 9px; font-size: 29px; line-height: 38px; font-weight: 900; }
.words span { font: 14px/20px "DejaVu Sans", sans-serif; color: #a9d6d0; opacity: .8; }
```
